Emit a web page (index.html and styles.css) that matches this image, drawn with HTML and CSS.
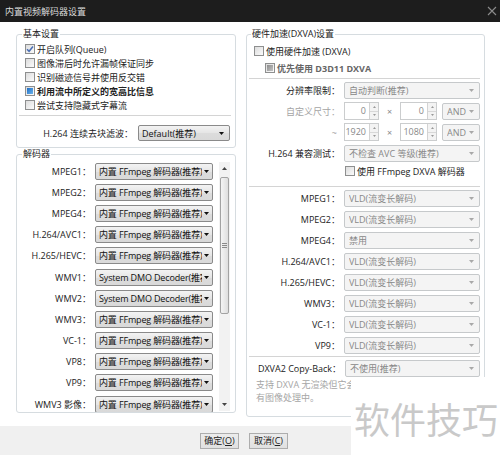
FILE: index.html
```html
<!DOCTYPE html>
<html>
<head>
<meta charset="utf-8">
<link rel="stylesheet" href="styles.css">
</head>
<body>
<div class="win">
  <div class="titlebar">
    <span class="title">内置视频解码器设置</span>
    <svg class="close" width="10" height="10" viewBox="0 0 10 10"><path d="M1 1L9 9M9 1L1 9" stroke="#8c8c8c" stroke-width="1.1" fill="none"/></svg>
  </div>
  <div class="content">
    <div class="leftcol">
      <fieldset class="grp basic">
        <legend>基本设置</legend>
        <div class="chk c1"><span class="cb"><svg width="8" height="8" viewBox="0 0 8 8"><path d="M1 4.2L3.1 6.3L7 1.5" stroke="#4a6fb5" stroke-width="1.5" fill="none"/></svg></span>开启队列(Queue)</div>
        <div class="chk"><span class="cb"></span>图像滞后时允许漏帧保证同步</div>
        <div class="chk"><span class="cb"></span>识别磁迹信号并使用反交错</div>
        <div class="chk bold"><span class="cb"><span class="ind"></span></span>利用流中所定义的宽高比信息</div>
        <div class="chk"><span class="cb"></span>尝试支持隐藏式字幕流</div>
        <div class="sep"></div>
        <div class="brow">
          <span class="blbl">H.264 连续去块滤波：</span>
          <div class="sel en w92"><span class="st">Default(推荐)</span><svg class="arr" width="5" height="3" viewBox="0 0 5 3"><path d="M0 0H5L2.5 3Z" fill="#111"/></svg></div>
        </div>
      </fieldset>
      <fieldset class="grp dec">
        <legend>解码器</legend>
        <div class="decbody">
          <div class="declist">
            <div class="drow"><span class="dl">MPEG1：</span><div class="sel en"><span class="st">内置 FFmpeg 解码器(推荐)</span><svg class="arr" width="5" height="3" viewBox="0 0 5 3"><path d="M0 0H5L2.5 3Z" fill="#111"/></svg></div></div>
            <div class="drow"><span class="dl">MPEG2：</span><div class="sel en"><span class="st">内置 FFmpeg 解码器(推荐)</span><svg class="arr" width="5" height="3" viewBox="0 0 5 3"><path d="M0 0H5L2.5 3Z" fill="#111"/></svg></div></div>
            <div class="drow"><span class="dl">MPEG4：</span><div class="sel en"><span class="st">内置 FFmpeg 解码器(推荐)</span><svg class="arr" width="5" height="3" viewBox="0 0 5 3"><path d="M0 0H5L2.5 3Z" fill="#111"/></svg></div></div>
            <div class="drow"><span class="dl">H.264/AVC1：</span><div class="sel en"><span class="st">内置 FFmpeg 解码器(推荐)</span><svg class="arr" width="5" height="3" viewBox="0 0 5 3"><path d="M0 0H5L2.5 3Z" fill="#111"/></svg></div></div>
            <div class="drow"><span class="dl">H.265/HEVC：</span><div class="sel en"><span class="st">内置 FFmpeg 解码器(推荐)</span><svg class="arr" width="5" height="3" viewBox="0 0 5 3"><path d="M0 0H5L2.5 3Z" fill="#111"/></svg></div></div>
            <div class="drow"><span class="dl">WMV1：</span><div class="sel en"><span class="st">System DMO Decoder(推荐)</span><svg class="arr" width="5" height="3" viewBox="0 0 5 3"><path d="M0 0H5L2.5 3Z" fill="#111"/></svg></div></div>
            <div class="drow"><span class="dl">WMV2：</span><div class="sel en"><span class="st">System DMO Decoder(推荐)</span><svg class="arr" width="5" height="3" viewBox="0 0 5 3"><path d="M0 0H5L2.5 3Z" fill="#111"/></svg></div></div>
            <div class="drow"><span class="dl">WMV3：</span><div class="sel en"><span class="st">内置 FFmpeg 解码器(推荐)</span><svg class="arr" width="5" height="3" viewBox="0 0 5 3"><path d="M0 0H5L2.5 3Z" fill="#111"/></svg></div></div>
            <div class="drow"><span class="dl">VC-1：</span><div class="sel en"><span class="st">内置 FFmpeg 解码器(推荐)</span><svg class="arr" width="5" height="3" viewBox="0 0 5 3"><path d="M0 0H5L2.5 3Z" fill="#111"/></svg></div></div>
            <div class="drow"><span class="dl">VP8：</span><div class="sel en"><span class="st">内置 FFmpeg 解码器(推荐)</span><svg class="arr" width="5" height="3" viewBox="0 0 5 3"><path d="M0 0H5L2.5 3Z" fill="#111"/></svg></div></div>
            <div class="drow"><span class="dl">VP9：</span><div class="sel en"><span class="st">内置 FFmpeg 解码器(推荐)</span><svg class="arr" width="5" height="3" viewBox="0 0 5 3"><path d="M0 0H5L2.5 3Z" fill="#111"/></svg></div></div>
            <div class="drow"><span class="dl">WMV3 影像：</span><div class="sel en"><span class="st">内置 FFmpeg 解码器(推荐)</span><svg class="arr" width="5" height="3" viewBox="0 0 5 3"><path d="M0 0H5L2.5 3Z" fill="#111"/></svg></div></div>
          </div>
          <div class="vscroll">
            <div class="sbtn"><svg width="5" height="3" viewBox="0 0 5 3"><path d="M0 3H5L2.5 0Z" fill="#444"/></svg></div>
            <div class="thumb"><svg width="5" height="5" viewBox="0 0 5 5"><path d="M0 0.5H5M0 2.5H5M0 4.5H5" stroke="#8a8a8a" stroke-width="1"/></svg></div>
            <div class="track"></div>
            <div class="sbtn"><svg width="5" height="3" viewBox="0 0 5 3"><path d="M0 0H5L2.5 3Z" fill="#444"/></svg></div>
          </div>
        </div>
      </fieldset>
    </div>
    <fieldset class="grp hw">
      <legend>硬件加速(DXVA)设置</legend>
      <div class="chk r1"><span class="cb"></span>使用硬件加速 (DXVA)</div>
      <div class="chk r2 boldgray"><span class="cb"><span class="ind gray"></span></span>优先使用 D3D11 DXVA</div>
      <div class="sep hsep"></div>
      <div class="frow first"><span class="lbl">分辨率限制：</span><div class="sel dis wfull"><span class="st">自动判断(推荐)</span><svg class="arr" width="5" height="3" viewBox="0 0 5 3"><path d="M0 0H5L2.5 3Z" fill="#a8a8a8"/></svg></div></div>
      <div class="frow"><span class="lbl muted">自定义尺寸：</span>
        <div class="spinrow">
          <div class="spin w35"><span class="num">0</span><span class="sp"><span class="spu"><svg width="3" height="2" viewBox="0 0 3 2"><path d="M0 2H3L1.5 0Z" fill="#999"/></svg></span><span class="spd"><svg width="3" height="2" viewBox="0 0 3 2"><path d="M0 0H3L1.5 2Z" fill="#999"/></svg></span></span></div>
          <span class="times">×</span>
          <div class="spin w37"><span class="num">0</span><span class="sp"><span class="spu"><svg width="3" height="2" viewBox="0 0 3 2"><path d="M0 2H3L1.5 0Z" fill="#999"/></svg></span><span class="spd"><svg width="3" height="2" viewBox="0 0 3 2"><path d="M0 0H3L1.5 2Z" fill="#999"/></svg></span></span></div>
          <div class="sel dis wand"><span class="st">AND</span><svg class="arr" width="5" height="3" viewBox="0 0 5 3"><path d="M0 0H5L2.5 3Z" fill="#a8a8a8"/></svg></div>
        </div>
      </div>
      <div class="frow"><span class="lbl muted tilde">~</span>
        <div class="spinrow">
          <div class="spin w35"><span class="num">1920</span><span class="sp"><span class="spu"><svg width="3" height="2" viewBox="0 0 3 2"><path d="M0 2H3L1.5 0Z" fill="#999"/></svg></span><span class="spd"><svg width="3" height="2" viewBox="0 0 3 2"><path d="M0 0H3L1.5 2Z" fill="#999"/></svg></span></span></div>
          <span class="times">×</span>
          <div class="spin w37"><span class="num">1080</span><span class="sp"><span class="spu"><svg width="3" height="2" viewBox="0 0 3 2"><path d="M0 2H3L1.5 0Z" fill="#999"/></svg></span><span class="spd"><svg width="3" height="2" viewBox="0 0 3 2"><path d="M0 0H3L1.5 2Z" fill="#999"/></svg></span></span></div>
          <div class="sel dis wand"><span class="st">AND</span><svg class="arr" width="5" height="3" viewBox="0 0 5 3"><path d="M0 0H5L2.5 3Z" fill="#a8a8a8"/></svg></div>
        </div>
      </div>
      <div class="frow"><span class="lbl">H.264 兼容测试：</span><div class="sel dis wfull"><span class="st">不检查 AVC 等级(推荐)</span><svg class="arr" width="5" height="3" viewBox="0 0 5 3"><path d="M0 0H5L2.5 3Z" fill="#a8a8a8"/></svg></div></div>
      <div class="chk r3"><span class="cb"></span>使用 FFmpeg DXVA 解码器</div>
      <div class="sep hsep s2"></div>
      <div class="frow cod first2"><span class="lbl">MPEG1：</span><div class="sel dis wfull"><span class="st">VLD(流变长解码)</span><svg class="arr" width="5" height="3" viewBox="0 0 5 3"><path d="M0 0H5L2.5 3Z" fill="#a8a8a8"/></svg></div></div>
      <div class="frow cod"><span class="lbl">MPEG2：</span><div class="sel dis wfull"><span class="st">VLD(流变长解码)</span><svg class="arr" width="5" height="3" viewBox="0 0 5 3"><path d="M0 0H5L2.5 3Z" fill="#a8a8a8"/></svg></div></div>
      <div class="frow cod"><span class="lbl">MPEG4：</span><div class="sel dis wfull"><span class="st">禁用</span><svg class="arr" width="5" height="3" viewBox="0 0 5 3"><path d="M0 0H5L2.5 3Z" fill="#a8a8a8"/></svg></div></div>
      <div class="frow cod"><span class="lbl">H.264/AVC1：</span><div class="sel dis wfull"><span class="st">VLD(流变长解码)</span><svg class="arr" width="5" height="3" viewBox="0 0 5 3"><path d="M0 0H5L2.5 3Z" fill="#a8a8a8"/></svg></div></div>
      <div class="frow cod"><span class="lbl">H.265/HEVC：</span><div class="sel dis wfull"><span class="st">VLD(流变长解码)</span><svg class="arr" width="5" height="3" viewBox="0 0 5 3"><path d="M0 0H5L2.5 3Z" fill="#a8a8a8"/></svg></div></div>
      <div class="frow cod"><span class="lbl">WMV3：</span><div class="sel dis wfull"><span class="st">VLD(流变长解码)</span><svg class="arr" width="5" height="3" viewBox="0 0 5 3"><path d="M0 0H5L2.5 3Z" fill="#a8a8a8"/></svg></div></div>
      <div class="frow cod"><span class="lbl">VC-1：</span><div class="sel dis wfull"><span class="st">VLD(流变长解码)</span><svg class="arr" width="5" height="3" viewBox="0 0 5 3"><path d="M0 0H5L2.5 3Z" fill="#a8a8a8"/></svg></div></div>
      <div class="frow cod"><span class="lbl">VP9：</span><div class="sel dis wfull"><span class="st">VLD(流变长解码)</span><svg class="arr" width="5" height="3" viewBox="0 0 5 3"><path d="M0 0H5L2.5 3Z" fill="#a8a8a8"/></svg></div></div>
      <div class="sep hsep s3"></div>
      <div class="frow cb2"><span class="lbl">DXVA2 Copy-Back：</span><div class="sel dis wcb"><span class="st">不使用(推荐)</span><svg class="arr" width="5" height="3" viewBox="0 0 5 3"><path d="M0 0H5L2.5 3Z" fill="#a8a8a8"/></svg></div></div>
      <div class="help">支持 DXVA 无渲染但它会跳过所<br>有图像处理中。</div>
    </fieldset>
  </div>
  <div class="footer">
    <button class="btn">确定(<u>O</u>)</button>
    <button class="btn">取消(<u>C</u>)</button>
  </div>
  <div class="watermark">软件技巧</div>
</div>
</body>
</html>
```
FILE: styles.css
```css
* { box-sizing: border-box; }
html, body { margin: 0; padding: 0; }
body {
  width: 500px;
  height: 455px;
  overflow: hidden;
  background: #fff;
  font-family: "Open Sans", "Noto Sans CJK SC", sans-serif;
  font-size: 9px;
  color: #222;
}
.win {
  position: relative;
  width: 500px;
  height: 455px;
  display: flex;
  flex-direction: column;
}
.titlebar {
  height: 22px;
  flex: none;
  background: #1d1d1d;
  color: #dcdcdc;
  display: flex;
  align-items: center;
  justify-content: space-between;
  padding: 0 3px 0 5px;
  font-size: 9px;
}
.content {
  height: 404px;
  flex: none;
  display: flex;
  gap: 10px;
  padding: 6px 15px 9px 16px;
}
.leftcol {
  width: 220px;
  display: flex;
  flex-direction: column;
}
fieldset.grp {
  margin: 0;
  border: 1px solid #d6dce0;
  border-radius: 3px;
  min-width: 0;
}
legend {
  font-size: 9px;
  line-height: 12px;
  padding: 0 1px;
  margin-left: 0;
  color: #222;
}
.basic { padding: 0 5px 6px 5px; }
.chk {
  height: 14px;
  display: flex;
  align-items: center;
  padding-left: 3px;
  white-space: nowrap;
}
.chk.c1 { margin-top: 2px; }
.chk.bold { font-weight: bold; }
.cb {
  width: 10px;
  height: 10px;
  flex: none;
  border: 1px solid #8e8f8f;
  background: linear-gradient(135deg, #dcdcdc, #fbfbfb);
  margin-right: 2px;
  display: flex;
  align-items: center;
  justify-content: center;
}
.ind {
  width: 6px;
  height: 6px;
  background: linear-gradient(135deg, #1d6cc4, #6cb4ec);
}
.ind.gray { background: linear-gradient(135deg, #8c8c8c, #c4c4c4); }
.sep {
  height: 1px;
  background: #d4d4d4;
  margin: 3px -1px 0 -3px;
}
.brow {
  margin-top: 9px;
  display: flex;
  justify-content: flex-end;
  align-items: center;
}
.blbl { margin-right: 5px; white-space: nowrap; }
.sel {
  height: 17px;
  display: flex;
  align-items: center;
  justify-content: space-between;
  border-radius: 2px;
  padding: 0 3px 0 3px;
  white-space: nowrap;
  overflow: hidden;
  flex: none;
}
.sel .st { overflow: hidden; flex: 1; min-width: 0; }
.sel .arr { flex: none; margin-left: 2px; }
.sel.en {
  width: 118px;
  border: 1px solid #8a8a8a;
  background: linear-gradient(#f3f3f3, #e5e5e5 50%, #dcdcdc 51%, #d9d9d9);
  color: #111;
  letter-spacing: -0.15px;
}
.sel.w92 { width: 92px; height: 16px; letter-spacing: 0; padding-right: 5px; }
.sel.dis {
  border: 1px solid #c6c9cb;
  background: #f4f4f4;
  color: #888;
  padding: 0 5px 0 4px;
}
.wfull { width: 136px; }
.wand { width: 38px; margin-left: 5px; }
.wcb { width: 135px; }
.dec {
  margin-top: 4px;
  padding: 0 5px;
}
.decbody {
  height: 252px;
  display: flex;
}
.declist {
  width: 197px;
  overflow: hidden;
  padding-top: 0.5px;
}
.drow {
  height: 21.2px;
  display: flex;
  align-items: center;
}
.dl {
  width: 69px;
  margin-right: 4px;
  text-align: right;
  white-space: nowrap;
}
.vscroll {
  width: 11px;
  margin: 2px 0 1px 0;
  display: flex;
  flex-direction: column;
  background: #f2f2f2;
}
.sbtn {
  height: 13px;
  display: flex;
  align-items: center;
  justify-content: center;
  flex: none;
}
.thumb {
  height: 137px;
  margin: 2px 1px 0;
  border: 1px solid #a2a2a2;
  border-radius: 2px;
  background: linear-gradient(to right, #f4f4f4, #dedede);
  display: flex;
  align-items: center;
  justify-content: center;
  flex: none;
}
.track { flex: 1; }
.hw {
  width: 239px;
  padding: 0 4px;
}
.r1 { margin-top: 4px; }
.r2 { margin-top: 3px; padding-left: 14px; }
.boldgray { font-weight: bold; color: #666; }
.hsep { margin: 3px 0 0 -2px; }
.frow {
  height: 21px;
  display: flex;
  align-items: center;
}
.frow.first { margin-top: 0.5px; }
.frow.cod { height: 21.1px; }
.lbl {
  width: 89px;
  margin-right: 4px;
  text-align: right;
  white-space: nowrap;
  flex: none;
}
.lbl.muted { color: #a4a4a4; }
.lbl.tilde { padding-right: 3px; }
.spinrow { display: flex; align-items: center; }
.spin {
  height: 18px;
  display: flex;
  border: 1px solid #cbcdce;
  background: #fff;
  flex: none;
}
.w35 { width: 35px; }
.w37 { width: 37px; }
.num {
  flex: 1;
  text-align: right;
  padding-right: 3px;
  color: #888;
  line-height: 16px;
}
.sp {
  width: 9px;
  display: flex;
  flex-direction: column;
  border-left: 1px solid #d3d3d3;
  background: #f3f3f3;
}
.spu, .spd {
  flex: 1;
  display: flex;
  align-items: center;
  justify-content: center;
}
.spu { border-bottom: 1px solid #d8d8d8; }
.times {
  width: 21px;
  text-align: center;
  color: #888;
}
.r3 { height: 15px; padding-left: 94px; }
.s2 { margin-top: 7.5px; }
.first2 { margin-top: 0.5px; }
.s3 { margin-top: 0; }
.frow.cb2 { height: 18px; margin-top: 2.5px; }
.cb2 .lbl { width: 90px; }
.help {
  padding-left: 5px;
  line-height: 13px;
  color: #a6a6a6;
  white-space: nowrap;
}
.footer {
  flex: 1;
  background: #f0f0f0;
  display: flex;
  align-items: center;
  justify-content: center;
  gap: 10px;
  padding-right: 12px;
}
.btn {
  width: 39px;
  height: 16px;
  padding: 0;
  font-family: inherit;
  font-size: 9px;
  color: #222;
  border: 1px solid #adadad;
  background: linear-gradient(#ececec, #e0e0e0);
  border-radius: 0;
}
.watermark {
  position: absolute;
  left: 351px;
  top: 377px;
  width: 149px;
  height: 78px;
  background: #fff;
  color: #c9c9c9;
  font-family: "Noto Sans CJK SC", sans-serif;
  font-size: 36px;
  line-height: 40px;
  padding: 21px 0 0 3px;
  white-space: nowrap;
}
```
